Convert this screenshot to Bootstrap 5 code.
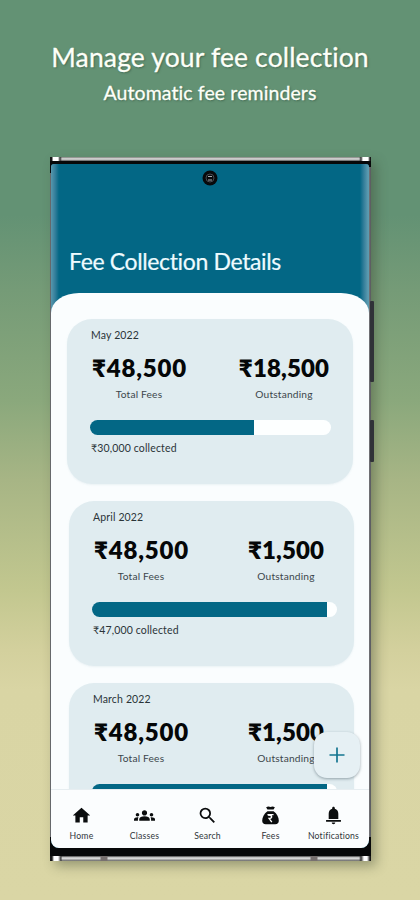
<!DOCTYPE html>
<html lang="en">
<head>
<meta charset="utf-8">
<meta name="viewport" content="width=device-width, initial-scale=1">
<title>Fee Collection Details</title>
<link href="https://cdn.jsdelivr.net/npm/bootstrap@5.3.0/dist/css/bootstrap.min.css" rel="stylesheet">
<style>
  body { font-family: Lato, "Open Sans", sans-serif; color: #15191c; }
  .promo { width: 420px; height: 900px; background: linear-gradient(#639274 0, #639274 215px, #759b77 290px, #8aa87c 400px, #a7b585 480px, #c2c78f 590px, #d3d09d 650px, #d9d5a4 690px, #dad6a5 900px); }
  .promo-title { font-size: 26.5px; line-height: 32px; padding-top: 41px; color: #fdfff8; text-shadow: 1px 1px 2px #2b493899; white-space: nowrap; letter-spacing: .14px; -webkit-text-stroke: .3px #fdfff8; }
  .promo-sub { font-size: 19.5px; line-height: 24px; margin-top: 8px; color: #fdfff8; text-shadow: 1px 1px 2px #2b493899; letter-spacing: .1px; -webkit-text-stroke: .3px #fdfff8; }
  .phone { width: 321px; height: 704px; margin: 52px 0 0 50px; padding: 7px 2px 13px 1px; background: #070809; border-radius: 2px; box-shadow: 5px 5px 12px #3b44306b; }
  .rim { left: 0; right: 0; pointer-events: none; }
  .rim-top { top: 0; height: 4px; background: linear-gradient(90deg, #171717 0 2px, #fff 3px 8px, #333 10px, transparent 12px 309px, #333 311px, #fff 313px 318px, #171717 320px), linear-gradient(#7b7d79, #e5e5e5 2px, #555 4px); }
  .rim-bottom { bottom: 0; height: 5px; background: linear-gradient(90deg, #171717 0 2px, #fff 4px 8px, #333 11px, transparent 12px 50px, #77706f 51px 57px, transparent 58px 260px, #77706f 261px 267px, transparent 268px 309px, #333 311px, #fff 314px 317px, #171717 320px), linear-gradient(#444, #eee 2px, #666 5px); }
  .rim-side { top: 10px; bottom: 24px; right: 0; width: 2px; background: linear-gradient(90deg, #77777b, #55565b); }
  .rim-left { top: 16px; bottom: 24px; left: 0; width: 1px; background: #66686b; }
  .side-key { right: -3px; width: 4px; background: #303238; border-radius: 1px; }
  .key-long { top: 144px; height: 81px; }
  .key-short { top: 263px; height: 42px; }
  .screen { background: #036785; height: 684px; border-radius: 3px 3px 8px 8px; }
  .app-head { height: 129px; flex: none; padding: 6px 18px 19px; }
  .app-head, .head-fill { background: linear-gradient(90deg, #5797ad 0, #357f9b 4px, #036785 8px, #036785 309px, #357f9b 313px, #5c9bb0 317px); }
  .app-title { font-size: 23px; line-height: 26px; color: #eefbff; letter-spacing: -.36px; white-space: nowrap; -webkit-text-stroke: .2px #eefbff; }
  .head-fill { min-height: 0; }
  .sheet { background: #fafdfe; border-radius: 28px 28px 0 0 / 20px 20px 0 0; padding: 26px 15px 0 18px; gap: 17px; }
  .fee-card { height: 165px; flex: none; border-radius: 25px; background: #e0ecf0; padding: 9px 17px 0 23px; box-shadow: 0 1px 2px #d5e3e866; }
  .fee-card.first { margin-left: -2px; margin-right: 1px; padding-right: 22px; }
  .month { font-size: 10.5px; line-height: 14px; padding-left: 1px; letter-spacing: .15px; color: #2b3438; }
  .stat { width: 98px; }
  .stat .amount { letter-spacing: .85px; margin-right: -1px; }
  .stat-b { width: 94px; }
  .fee-card:not(.first) .stat-b { margin-right: 4px; }
  .amount { font-size: 24px; font-weight: 800; line-height: 28px; color: #050708; white-space: nowrap; margin-top: 12px; letter-spacing: .15px; }
  .stat-label { font-size: 10.2px; line-height: 14px; margin-top: 5px; color: #3c464b; letter-spacing: .18px; }
  .meter { height: 15px; border-radius: 8px; background: #fdffff; margin-top: 19px; }
  .meter .progress-bar { background: #036785; }
  .collected { font-size: 10.5px; line-height: 14px; margin-top: 6px; padding-left: 1px; letter-spacing: .15px; color: #2b3438; }
  .tabs { height: 59px; border-top: 1px solid #e7eef1; background: #fbfdfe; margin-left: -1px; }
  .tab { width: 63px; font-size: 8.7px; line-height: 11px; color: #30363a; padding-top: 15px; gap: 4px; letter-spacing: .18px; }
  .tab svg { width: 21px; height: 21px; fill: #0b0d0e; }
  .fab { right: 9px; bottom: 70px; width: 46px; height: 46px; border-radius: 13px; background: #e6f0f4; box-shadow: 0 1px 3px #5d6f7899; }
  .fab svg { width: 16px; height: 16px; stroke: #147590; stroke-width: 1.7; }
</style>
<script src="https://cdn.jsdelivr.net/npm/bootstrap@5.3.0/dist/js/bootstrap.bundle.min.js"></script>
</head>
<body class="m-0">
<main class="promo overflow-hidden">
  <h1 class="promo-title text-center fw-normal m-0">Manage your fee collection</h1>
  <p class="promo-sub text-center mb-0">Automatic fee reminders</p>
  <div class="phone position-relative">
    <div class="rim rim-top position-absolute"></div>
    <div class="rim rim-bottom position-absolute"></div>
    <div class="rim-side position-absolute"></div>
    <div class="rim-left position-absolute"></div>
    <div class="side-key key-long position-absolute"></div>
    <div class="side-key key-short position-absolute"></div>
    <div class="screen position-relative d-flex flex-column overflow-hidden">
      <header class="app-head d-flex flex-column justify-content-between">
        <svg class="align-self-center" width="16" height="16" viewBox="0 0 16 16"><circle cx="8" cy="8" r="7.5" fill="#080a0c"/><circle cx="8" cy="8" r="4" fill="none" stroke="#444a50"/><path d="M6 6.500h4M6 10h4" stroke="#a8acb0"/></svg>
        <h2 class="app-title fw-normal m-0">Fee Collection Details</h2>
      </header>
      <div class="head-fill flex-fill overflow-hidden d-flex">
        <div class="sheet d-flex flex-column w-100">
          <section class="fee-card first">
            <div class="month">May 2022</div>
            <div class="d-flex justify-content-between text-center">
              <div class="stat"><div class="amount">₹48,500</div><div class="stat-label">Total Fees</div></div>
              <div class="stat-b"><div class="amount">₹18,500</div><div class="stat-label">Outstanding</div></div>
            </div>
            <div class="progress meter"><div class="progress-bar" style="width:68.2%"></div></div>
            <div class="collected">₹30,000 collected</div>
          </section>
          <section class="fee-card">
            <div class="month">April 2022</div>
            <div class="d-flex justify-content-between text-center">
              <div class="stat"><div class="amount">₹48,500</div><div class="stat-label">Total Fees</div></div>
              <div class="stat-b"><div class="amount">₹1,500</div><div class="stat-label">Outstanding</div></div>
            </div>
            <div class="progress meter"><div class="progress-bar" style="width:95.8%"></div></div>
            <div class="collected">₹47,000 collected</div>
          </section>
          <section class="fee-card">
            <div class="month">March 2022</div>
            <div class="d-flex justify-content-between text-center">
              <div class="stat"><div class="amount">₹48,500</div><div class="stat-label">Total Fees</div></div>
              <div class="stat-b"><div class="amount">₹1,500</div><div class="stat-label">Outstanding</div></div>
            </div>
            <div class="progress meter"><div class="progress-bar" style="width:95.8%"></div></div>
          </section>
        </div>
      </div>
      <nav class="tabs d-flex flex-shrink-0">
        <div class="tab d-flex flex-column align-items-center"><svg viewBox="0 0 24 24"><path d="M10 20v-6h4v6h5v-8h3L12 3 2 12h3v8z"/></svg><span>Home</span></div>
        <div class="tab d-flex flex-column align-items-center"><svg viewBox="0 0 24 24"><path d="M12 12.75c1.63 0 3.07.39 4.24.9 1.08.48 1.76 1.56 1.76 2.73V18H6v-1.61c0-1.18.68-2.26 1.76-2.73 1.17-.52 2.61-.91 4.24-.91zM4 13c1.1 0 2-.9 2-2s-.9-2-2-2-2 .9-2 2 .9 2 2 2zm1.13 1.1C4.76 14.04 4.39 14 4 14c-.99 0-1.93.21-2.78.58C.48 14.9 0 15.62 0 16.43V18h4.5v-1.61c0-.83.23-1.61.63-2.29zM20 13c1.1 0 2-.9 2-2s-.9-2-2-2-2 .9-2 2 .9 2 2 2zm4 3.43c0-.81-.48-1.53-1.22-1.85-.85-.37-1.79-.58-2.78-.58-.39 0-.76.04-1.13.1.4.68.63 1.46.63 2.29V18H24zM12 6c1.66 0 3 1.34 3 3s-1.34 3-3 3-3-1.34-3-3 1.34-3 3-3z"/></svg><span>Classes</span></div>
        <div class="tab d-flex flex-column align-items-center"><svg viewBox="0 0 24 24"><path d="M15.5 14h-.79l-.28-.27A6.47 6.47 0 0 0 16 9.5 6.5 6.5 0 1 0 9.5 16c1.61 0 3.09-.59 4.23-1.57l.27.28v.79l5 4.99L20.49 19zm-6 0C7.01 14 5 11.99 5 9.500S7.010 5 9.500 5 14 7.010 14 9.500 11.990 14 9.500 14z"/></svg><span>Search</span></div>
        <div class="tab d-flex flex-column align-items-center"><svg viewBox="0 0 24 24"><path d="M7 2.500Q9.500 1 12 2.200 14.500 1 17 2.500L15.500 5h-7zM8.500 7h7c4 3 6 7 6 11 0 2.500-1.500 4-4 4h-11c-2.500 0-4-1.500-4-4 0-4 2-8 6-11z"/><path d="M8.500 11h7M9 11.500c6 0 5 4 1.500 4l3 4" fill="none" stroke="#fff" stroke-width="1.600"/></svg><span>Fees</span></div>
        <div class="tab d-flex flex-column align-items-center"><svg viewBox="0 0 24 24"><path d="M12 2c-.9 0-1.500.7-1.500 1.500v.7C7.800 4.900 6.500 7.200 6.500 10v6h11v-6c0-2.800-1.300-5.100-4-5.800v-.7C13.500 2.700 12.900 2 12 2zM3.500 17h17v2h-17zM10 20h4c0 1.100-.9 2-2 2s-2-.9-2-2z"/></svg><span>Notifications</span></div>
      </nav>
      <div class="fab position-absolute d-flex align-items-center justify-content-center"><svg viewBox="0 0 16 16" fill="none"><path d="M8 .5v15M.5 8h15"/></svg></div>
    </div>
  </div>
</main>
</body>
</html>
